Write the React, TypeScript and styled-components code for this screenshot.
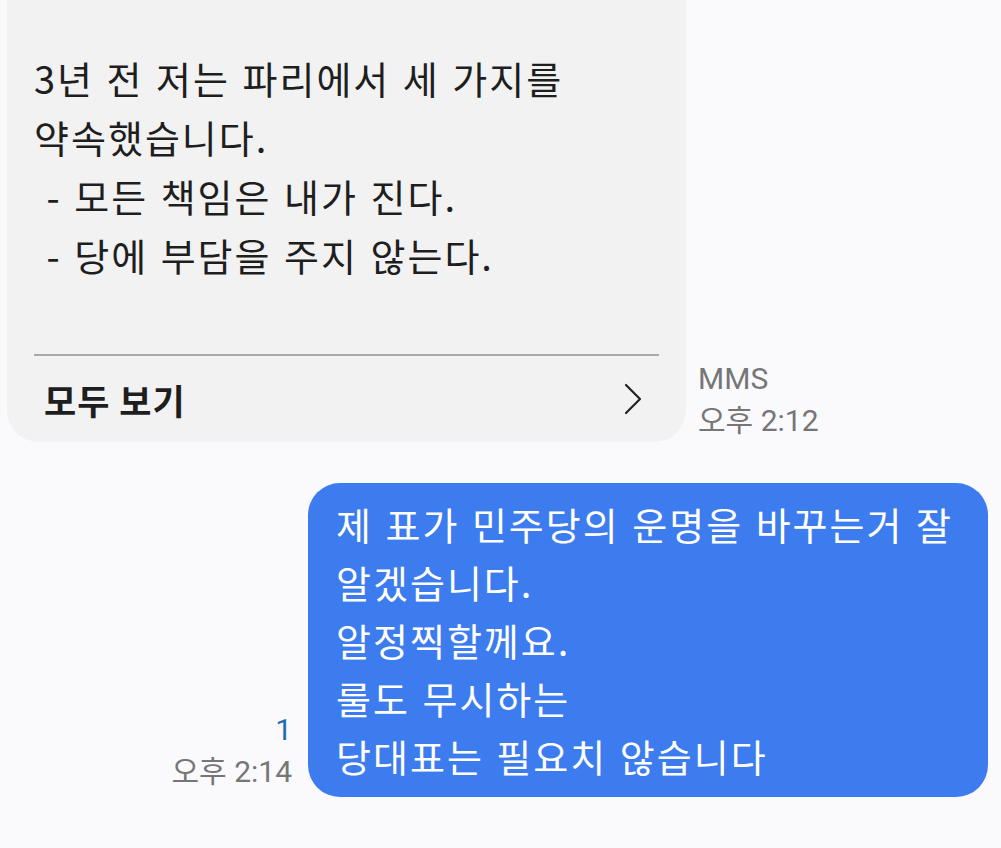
import styled, { createGlobalStyle } from 'styled-components';

const GlobalStyle = createGlobalStyle`
  html, body {
    margin: 0;
    padding: 0;
    background: #fafafc;
  }
  body {
    font-family: 'Noto Sans CJK KR', 'Noto Sans', sans-serif;
    -webkit-font-smoothing: antialiased;
  }
`;

const Thread = styled.div`
  width: 1001px;
  height: 848px;
  overflow: hidden;
  display: flex;
  flex-direction: column;
  gap: 41px;
  padding: 0 13px 0 7px;
  box-sizing: border-box;
`;

const Row = styled.div<{ $mine?: boolean }>`
  display: flex;
  align-items: flex-end;
  justify-content: ${({ $mine }) => ($mine ? 'flex-end' : 'flex-start')};
  gap: ${({ $mine }) => ($mine ? '16px' : '12px')};
`;

const ReceivedBubble = styled.div`
  width: 679px;
  margin-top: -40px;
  padding-top: 88px;
  background: #f2f2f2;
  border-radius: 32px;
  box-sizing: border-box;
`;

const Body = styled.div`
  padding: 0 27px;
  font-size: 38px;
  line-height: 59px;
  letter-spacing: 2px;
  word-spacing: 2px;
  color: #1e1e1e;
  white-space: pre-wrap;
  height: 306px;
`;

const Divider = styled.hr`
  margin: 0 27px;
  border: none;
  border-top: 2px solid #a9a9a9;
`;

const MoreLink = styled.div`
  display: flex;
  align-items: center;
  justify-content: space-between;
  height: 86px;
  padding: 0 44px 0 37px;
  font-size: 35px;
  font-weight: 700;
  letter-spacing: 1px;
  color: #1e1e1e;
`;

const Meta = styled.div<{ $right?: boolean }>`
  display: flex;
  flex-direction: column;
  align-items: ${({ $right }) => ($right ? 'flex-end' : 'flex-start')};
  font-family: 'Roboto', 'Noto Sans CJK KR', sans-serif;
  font-size: 30px;
  line-height: 42px;
  color: #767676;
  padding-bottom: ${({ $right }) => ($right ? '4px' : '0')};
`;

const ReadCount = styled.span`
  color: #1f6ea8;
`;

const SentBubble = styled.div`
  width: 680px;
  padding: 12px 28px 12px 28px;
  background: #3d7cee;
  border-radius: 32px;
  box-sizing: border-box;
  font-size: 38px;
  line-height: 58px;
  letter-spacing: 2px;
  word-spacing: 2px;
  color: #fff;
  white-space: pre-wrap;
`;

const Chevron = () => (
  <svg width="18" height="32" viewBox="0 0 18 32" fill="none">
    <path d="M2 2 L16 16 L2 30" stroke="#222" strokeWidth="2.2" strokeLinecap="round" strokeLinejoin="round" />
  </svg>
);

export default function App() {
  return (
    <>
      <GlobalStyle />
      <Thread>
        <Row>
          <ReceivedBubble>
            <Body>
              {'3년 전 저는 파리에서 세 가지를\n약속했습니다.\n - 모든 책임은 내가 진다.\n - 당에 부담을 주지 않는다.'}
            </Body>
            <Divider />
            <MoreLink>
              <span>모두 보기</span>
              <Chevron />
            </MoreLink>
          </ReceivedBubble>
          <Meta>
            <span>MMS</span>
            <span>오후 2:12</span>
          </Meta>
        </Row>
        <Row $mine>
          <Meta $right>
            <ReadCount>1</ReadCount>
            <span>오후 2:14</span>
          </Meta>
          <SentBubble>
            {'제 표가 민주당의 운명을 바꾸는거 잘\n알겠습니다.\n알정찍할께요.\n룰도 무시하는\n당대표는 필요치 않습니다'}
          </SentBubble>
        </Row>
      </Thread>
    </>
  );
}
